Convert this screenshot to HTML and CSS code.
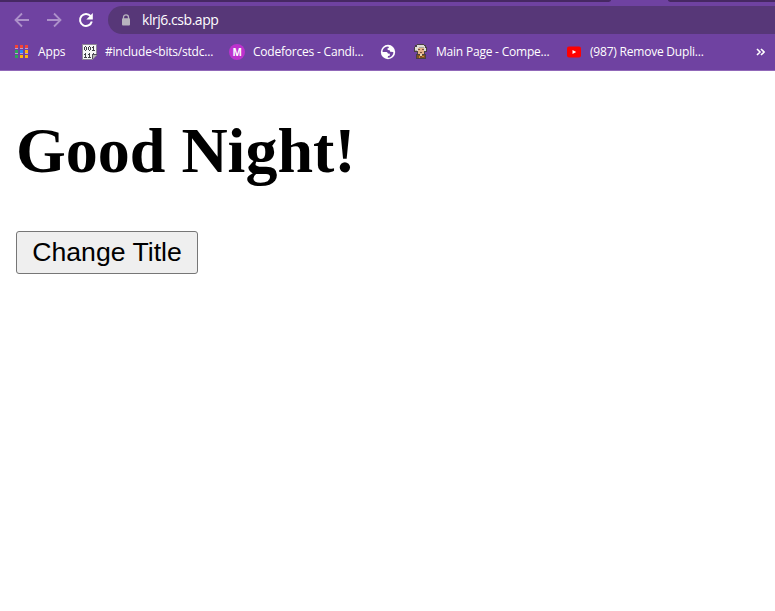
FILE: index.html
```html
<!DOCTYPE html>
<html lang="en">
<head>
<meta charset="utf-8">
<title>Good Night!</title>
<link rel="stylesheet" href="styles.css">
</head>
<body>
<header class="browser">
  <div class="tabs"><span class="tab-left"></span><span class="tab-right"></span></div>
  <nav class="toolbar">
    <svg class="nav-icon dim" viewBox="0 0 16 16"><path d="M15 8H2M8 1.500L1.500 8 8 14.500"/></svg>
    <svg class="nav-icon dim" viewBox="0 0 16 16"><path d="M1 8h13M8 1.500L14.500 8 8 14.500"/></svg>
    <svg class="nav-icon reload" viewBox="0 0 16 16"><path d="M12.700 4.200A6 6 0 1 0 13.800 9.500"/><path class="solid" d="M14.800 1v6.500H8.300z"/></svg>
    <div class="address">
      <svg class="lock" viewBox="0 0 10 12"><path d="M2.500 5V3.300a2.500 2.500 0 0 1 5 0V5" fill="none" stroke="#b8b4be" stroke-width="1.300"/><rect x="1" y="4.300" width="8" height="7.200" rx="1" fill="#b8b4be"/></svg>
      <span class="url">klrj6.csb.app</span>
    </div>
  </nav>
  <nav class="bookmarks">
    <div class="bookmark apps">
      <svg class="icon" viewBox="0 0 16 16" shape-rendering="crispEdges"><path fill="#f44336" d="M1 1h3v3H1zM6 1h3v3H6zM11 1h3v3h-3z"/><path fill="#2fa45b" d="M1 6h3v3H1zM1 11h3v3H1z"/><path fill="#2684fc" d="M6 6h3v3H6z"/><path fill="#ffb40a" d="M11 6h3v3h-3zM6 11h3v3H6zM11 11h3v3h-3z"/><path fill="#b7a0d0" d="M1 4h3v1H1zM6 4h3v1H6zM11 4h3v1h-3zM1 9h3v1H1zM6 9h3v1H6zM11 9h3v1h-3z"/></svg>
      <span>Apps</span>
    </div>
    <div class="bookmark include">
      <svg class="icon" viewBox="-1 0 16 16" shape-rendering="crispEdges"><path fill="#8d8496" d="M0 0h15v11l-4 5H0z"/><path fill="#f6f6f6" d="M1 1h13v10h-3v4H1z"/><path fill="#404046" d="M2 3h1v3H2zM4 3h1v3H4zM3 2h1v1H3zM3 6h1v1H3zM6 3h1v3H6zM8 3h1v3H8zM7 2h1v1H7zM7 6h1v1H7zM11 2h1v5h-1zM10 3h1v1h-1zM10 6h3v1h-3zM3 9h1v5H3zM2 10h1v1H2zM2 13h3v1H2zM7 9h1v5H7zM6 10h1v1H6zM6 13h3v1H6zM11 9h1v1h-1z"/><path fill="#b8b8b8" d="M10 11h4l-4 4z"/><path fill="#55505c" d="M10 10h5v1h-4v4h-1z"/></svg>
      <span>#include&lt;bits/stdc...</span>
    </div>
    <div class="bookmark forces">
      <span class="icon badge">M</span>
      <span>Codeforces - Candi...</span>
    </div>
    <div class="bookmark globe">
      <svg class="icon" viewBox="0 0 16 16"><circle cx="8" cy="8" r="7.200" fill="#fff"/><path fill="#6f42a1" d="M8.300 2.500Q4 2.500 2.600 6.500V8h4q1 0 1.300 1.500l2 .2-.2 2-1.700.3-.3 1.700q4.500 0 5.700-4.700l-.2-1-3-.2-.5-1.500-2-.2-.2-1.800 1.500-.3z"/></svg>
    </div>
    <div class="bookmark mainpage">
      <svg class="icon" viewBox="-1 0 16 16" shape-rendering="crispEdges"><path fill="#4a4144" d="M4 0h7v1h2v2h1v5h-2v2h1v5H3v-5h1V8H1V3h1V1h2z"/><path fill="#dedbd5" d="M4 1h7v1h1v2h1v3h-2V4H5v3H2V3h2z"/><path fill="#aaa69e" d="M6 3h5v1H6zM2 6h2v1H2z"/><path fill="#e4b087" d="M5 4h6v6H5z"/><path fill="#76513d" d="M5 5h2v1H5zM9 5h2v1H9zM7 8h2v1H7z"/><path fill="#825122" d="M4 11h8v3H4z"/><path fill="#ead9b9" d="M7 10h2v2H7z"/><path fill="#c98b30" d="M6 12h1v2H6zM9 12h2v1H9z"/></svg>
      <span>Main Page - Compe...</span>
    </div>
    <div class="bookmark video">
      <svg class="icon" viewBox="0 0 16 16"><rect x="1" y="2.500" width="14" height="11" rx="2" fill="#f00"/><path fill="#fff" d="M6.500 6v4l3.700-2z"/></svg>
      <span>(987) Remove Dupli...</span>
    </div>
    <svg class="more" viewBox="0 0 9 8"><path d="M1 1l3 3-3 3M5 1l3 3-3 3"/></svg>
  </nav>
</header>
<main>
  <h1>Good Night!</h1>
  <button type="button">Change Title</button>
</main>
</body>
</html>
```
FILE: styles.css
```css
* { box-sizing: border-box; }
body { margin: 0; background: #fff; color: #000; overflow: hidden; }
.browser {
  height: 71px;
  background: #6f42a1;
  border-bottom: 1px solid #9168b9;
  color: #fff;
  font-family: "Open Sans", "Noto Sans", sans-serif;
}
.tabs { height: 2px; display: flex; justify-content: space-between; }
.tab-left { width: 611px; background: #462863; border-bottom-right-radius: 4px 2px; }
.tab-right { width: 107px; background: #462863; border-bottom-left-radius: 4px 2px; }
.toolbar { height: 36px; padding: 4px 0 4px 14px; display: flex; align-items: center; }
.nav-icon { width: 16px; height: 16px; margin-right: 16px; fill: none; stroke: #fff; stroke-width: 1.8; flex: none; }
.dim { stroke: #ad91ca; }
.reload { stroke-width: 2; margin-right: 14px; }
.reload .solid { fill: #fff; stroke: none; }
.address { flex: 1; height: 28px; border-radius: 14px 0 0 14px; background: #573778; display: flex; align-items: center; padding-left: 13px; }
.lock { width: 10px; height: 12px; margin-right: 11px; }
.url { font-size: 14px; line-height: 18px; letter-spacing: -.46px; }
.bookmarks { height: 28px; display: grid; grid-template-columns: 67px 148px 151px 32px 154px 190px 9px; padding-left: 14px; align-items: center; }
.bookmark { display: flex; align-items: center; gap: 8px; font-size: 12px; line-height: 16px; white-space: nowrap; letter-spacing: -.21px; }
.apps { letter-spacing: -.15px; }
.icon { width: 16px; height: 16px; flex: none; }
.badge { border-radius: 50%; background: #bd32ce; font: bold 10px/16px "Open Sans", sans-serif; text-align: center; }
.more { width: 9px; height: 8px; fill: none; stroke: #fff; stroke-width: 1.6; }
main { padding: 43px 16px 0; }
h1 { margin: 0 0 43px; font: bold 64px/74px "Liberation Serif", serif; }
button { display: block; width: 182px; height: 43px; padding: 0 0 2px; border: 1px solid #767676; border-radius: 3px; background: #efefef; color: #000; font: 26.667px/30px "Liberation Sans", sans-serif; }
```
